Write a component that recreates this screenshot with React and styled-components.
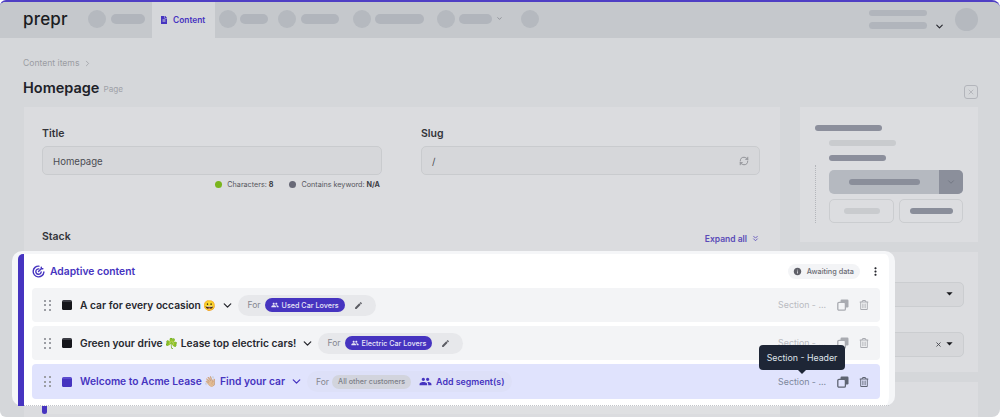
import React from 'react';
import styled, { createGlobalStyle } from 'styled-components';
import { ChevronDown, ChevronRight, ChevronsDown, RefreshCw, X } from 'lucide-react';
import { MdPeople, MdInfo, MdMoreVert, MdArrowDropDown, MdEdit } from 'react-icons/md';
import { FaFileAlt, FaRegTrashAlt } from 'react-icons/fa';

const PURPLE = '#4634c0';

const GlobalStyle = createGlobalStyle`
  html, body {
    margin: 0;
    padding: 0;
    background: #fff;
    font-family: Inter, "Noto Sans", sans-serif;
  }
  * { box-sizing: border-box; }
`;

const Page = styled.div`
  position: relative;
  width: 1000px;
  height: 417px;
  overflow: hidden;
  background: #d5d7da;
  border-top: 2px solid #4f3fc4;
  border-radius: 6px 8px 8px 6px;
`;

const Nav = styled.nav`
  display: flex;
  align-items: center;
  height: 36px;
  padding: 0 22px 3px 23px;
  background: #c5c8cc;
`;

const Logo = styled.div`
  width: 45px;
  margin-right: 20px;
  font-size: 17px;
  font-weight: 500;
  letter-spacing: 0.2px;
  line-height: 20px;
  color: #1b1c22;
`;

const SkeletonItem = styled.div`
  display: flex;
  align-items: center;
  gap: ${(p) => p.$inner || 5}px;
  margin-right: ${(p) => p.$gap || 10}px;
`;

const Circle = styled.span`
  display: block;
  width: ${(p) => p.$size || 18}px;
  height: ${(p) => p.$size || 18}px;
  border-radius: 50%;
  background: #b5b9bf;
`;

const Pill = styled.span`
  display: block;
  width: ${(p) => p.$width}px;
  height: ${(p) => p.$height || 10}px;
  border-radius: 5px;
  background: ${(p) => p.$color || '#b1b5bc'};
`;

const ActiveTab = styled.div`
  display: flex;
  align-items: center;
  gap: 5px;
  align-self: stretch;
  width: 63px;
  margin: 0 4px -3px 0;
  padding-left: 8px;
  background: #d5d7da;
  color: ${PURPLE};
  font-size: 8.4px;
  font-weight: 600;
`;

const NavRight = styled.div`
  display: flex;
  align-items: center;
  margin: 2px 0 0 auto;
`;

const NavLines = styled.div`
  display: flex;
  flex-direction: column;
  gap: 6px;
  margin-right: 7px;
`;

const NavChevron = styled(ChevronDown)`
  margin: 13px 10px 0 0;
  color: #26272e;
`;

const Body = styled.div`
  padding: 0 22px 0 23px;
`;

const Crumbs = styled.div`
  display: flex;
  align-items: center;
  gap: 4px;
  margin-top: 19px;
  height: 12px;
  font-size: 8.6px;
  color: #9b9da3;
`;

const TitleRow = styled.div`
  display: flex;
  align-items: center;
  height: 22px;
  margin-top: 7px;
`;

const Heading = styled.h1`
  margin: 0;
  font-size: 14.5px;
  font-weight: 600;
  color: #202128;
`;

const PageType = styled.span`
  margin: 3px 0 0 4px;
  font-size: 8.2px;
  color: #a0a2a8;
`;

const CollapseButton = styled.div`
  display: flex;
  align-items: center;
  justify-content: center;
  width: 14px;
  height: 14px;
  margin: 10px 0 0 auto;
  border: 1px solid #b3b5bb;
  border-radius: 3px;
  color: #a6a8ae;
`;

const Columns = styled.div`
  display: grid;
  grid-template-columns: 756px 178px;
  gap: 20px;
  margin: 9px 0 0 1px;
`;

const MainCard = styled.main`
  height: 320px;
  padding: 20px 20px 0 18px;
  background: #dbdcdf;
`;

const FieldGrid = styled.div`
  display: grid;
  grid-template-columns: 340px 339px;
  gap: 39px;
`;

const Label = styled.div`
  font-size: 10.5px;
  font-weight: 600;
  line-height: 14px;
  color: #33343a;
`;

const Input = styled.div`
  display: flex;
  align-items: center;
  justify-content: space-between;
  height: 29px;
  margin-top: 5px;
  padding: 1px 10px 0 10px;
  border: 1px solid #c9cbce;
  border-radius: 5px;
  background: #d6d7da;
  font-size: 9.6px;
  color: #4b4c53;
`;

const MetaRow = styled.div`
  display: flex;
  justify-content: flex-end;
  gap: 16px;
  height: 12px;
  margin-top: 3px;
  padding-right: 2px;
`;

const Meta = styled.span`
  display: flex;
  align-items: center;
  gap: 5px;
  font-size: 7.2px;
  color: #55565d;
  b { color: #3c3d44; }
`;

const Dot = styled.i`
  width: 7px;
  height: 7px;
  border-radius: 50%;
  background: ${(p) => p.$color};
`;

const StackRow = styled.div`
  display: flex;
  align-items: center;
  justify-content: space-between;
  margin-top: 40px;
`;

const ExpandAll = styled.div`
  display: flex;
  align-items: center;
  gap: 4px;
  margin-top: 3px;
  font-size: 8.5px;
  font-weight: 600;
  color: #5a4bb8;
`;

const NextBlock = styled.div`
  display: flex;
  height: 9px;
  margin: 161px -20px 0 0;
`;

const NextStub = styled.div`
  width: 5px;
  border-radius: 0 0 3px 3px;
  background: ${PURPLE};
`;

const NextRow = styled.div`
  flex: 1;
  background: #dfe0e2;
`;

const Sidebar = styled.aside`
  display: flex;
  flex-direction: column;
  gap: 10px;
  height: 320px;
`;

const SideCard = styled.section`
  flex: ${(p) => (p.$fill ? 1 : 'none')};
  height: ${(p) => (p.$height ? `${p.$height}px` : 'auto')};
  padding: ${(p) => p.$padding || '18px 15px'};
  background: #dcdde0;
`;

const Tree = styled.div`
  position: relative;
  display: flex;
  flex-direction: column;
  align-items: flex-start;
  gap: 9px;
  margin-top: 9px;
  padding-left: 14px;
  &::before {
    content: '';
    position: absolute;
    left: 0;
    top: 25px;
    bottom: 0;
    border-left: 1px dotted #b4b6bb;
  }
`;

const SplitButton = styled.div`
  display: flex;
  width: 134px;
  height: 24px;
  overflow: hidden;
  border-radius: 5px;
  background: #b5b9c0;
`;

const SplitLabel = styled.div`
  display: flex;
  flex: 1;
  align-items: center;
  justify-content: center;
`;

const SplitCaret = styled.div`
  display: flex;
  align-items: center;
  justify-content: center;
  width: 24px;
  background: #8b8f9b;
  color: #6f7380;
`;

const GhostRow = styled.div`
  display: grid;
  grid-template-columns: 65px 64px;
  gap: 5px;
  margin-top: -4px;
`;

const GhostButton = styled.div`
  display: flex;
  align-items: center;
  justify-content: center;
  height: 24px;
  border: 1px solid #cbcdd0;
  border-radius: 5px;
`;

const SelectStack = styled.div`
  display: flex;
  flex-direction: column;
  gap: 25px;
`;

const Select = styled.div`
  display: flex;
  align-items: center;
  justify-content: flex-end;
  height: 25px;
  padding-right: 6px;
  border: 1px solid #cbcdd0;
  border-radius: 5px;
  background: #d6d7da;
  color: #17181d;
`;

const Caret = styled(MdArrowDropDown)`
  margin-top: -3px;
`;

const Spotlight = styled.section`
  position: absolute;
  left: 12px;
  top: 249px;
  width: 883px;
  height: 155px;
  padding: 0 9px 7px 14px;
  border: solid #f5f6f8;
  border-width: 3px 6px 0 6px;
  border-radius: 10px;
  background: #fff;
  &::before {
    content: '';
    position: absolute;
    left: 0;
    top: 0;
    bottom: 0;
    width: 6px;
    border-radius: 5px 0 0 0;
    background: ${PURPLE};
  }
  &::after {
    content: '';
    position: absolute;
    left: 6px;
    right: 0;
    bottom: 0;
    border-bottom: 1px dotted #c3c5c9;
  }
`;

const SpotlightHeader = styled.header`
  display: flex;
  align-items: center;
  height: 34px;
  color: ${PURPLE};
  font-size: 10.3px;
  font-weight: 600;
`;

const AdaptiveTitle = styled.div`
  display: flex;
  align-items: center;
  gap: 5px;
`;

const Awaiting = styled.div`
  display: flex;
  align-items: center;
  gap: 5px;
  height: 15px;
  margin-left: auto;
  padding: 0 6px 0 5px;
  border-radius: 8px;
  background: #f3f4f6;
  font-size: 7.3px;
  font-weight: 500;
  color: #6b6d75;
`;

const Kebab = styled(MdMoreVert)`
  margin: 0 -1.5px 0 8.5px;
  color: #26272e;
`;

const Rows = styled.div`
  display: flex;
  flex-direction: column;
  gap: 4px;
`;

const Row = styled.div`
  display: flex;
  align-items: center;
  height: ${(p) => (p.$active ? 35 : 34)}px;
  padding: 0 11px 0 12px;
  border-radius: 4px;
  background: ${(p) => (p.$active ? '#e0e3fd' : '#f3f4f6')};
  color: ${(p) => (p.$active ? PURPLE : '#26272e')};
`;

const Handle = styled.span`
  display: grid;
  grid-template-columns: repeat(2, 2px);
  gap: 2.5px;
  width: 6.5px;
  margin-right: 11.5px;
  i {
    width: 2px;
    height: 2px;
    background: #9c9ea4;
  }
`;

const BlockIcon = styled.span`
  display: block;
  width: 10px;
  height: 10px;
  margin-right: 8px;
  border-radius: 1.5px;
  border-top: 2px solid ${(p) => (p.$active ? '#5b4bcf' : '#3b3c44')};
  background: ${(p) => (p.$active ? PURPLE : '#15161b')};
`;

const RowTitle = styled.span`
  font-size: 10.25px;
  font-weight: 600;
  white-space: nowrap;
`;

const RowChevron = styled(ChevronDown)`
  margin: 0 4px 0 5px;
  flex: none;
`;

const AudiencePill = styled.div`
  display: flex;
  align-items: center;
  height: 21px;
  padding: 0 ${(p) => (p.$plain ? 8 : 13)}px 0 9px;
  border-radius: 11px;
  background: ${(p) => (p.$plain ? '#dde0f8' : '#e7e8eb')};
  font-size: 8.6px;
  color: #85878f;
`;

const Tag = styled.span`
  display: flex;
  align-items: center;
  gap: 3px;
  height: 14px;
  margin-left: ${(p) => (p.$muted ? 3 : 4)}px;
  padding: 0 6px;
  border-radius: 7px;
  background: ${(p) => (p.$muted ? '#d2d4dd' : PURPLE)};
  color: ${(p) => (p.$muted ? '#7d7f88' : '#e8e7f7')};
  font-size: 7.2px;
  font-weight: 500;
  white-space: nowrap;
`;

const EditIcon = styled(MdEdit)`
  margin-left: 9px;
  color: #5b5c63;
`;

const AddSegment = styled.span`
  display: flex;
  align-items: center;
  gap: 4px;
  margin-left: 8px;
  font-size: 8.85px;
  font-weight: 600;
  color: ${PURPLE};
  white-space: nowrap;
`;

const SectionName = styled.span`
  position: relative;
  margin-left: auto;
  font-size: 8.8px;
  line-height: 12px;
  white-space: nowrap;
  color: ${(p) => (p.$active ? '#7d879c' : '#b9bbc1')};
`;

const Tooltip = styled.div`
  position: absolute;
  bottom: calc(100% + 6px);
  left: 50%;
  transform: translateX(-50%);
  z-index: 2;
  width: 86px;
  height: 25px;
  border-radius: 4px;
  background: #1e2636;
  color: #dfe3e9;
  font-size: 8.8px;
  line-height: 25px;
  text-align: center;
  &::after {
    content: '';
    position: absolute;
    left: 50%;
    top: 100%;
    margin-left: -4px;
    border: 4px solid transparent;
    border-bottom: 0;
    border-top-color: #1e2636;
  }
`;

const RowActions = styled.div`
  display: flex;
  align-items: center;
  gap: 10px;
  margin-left: 11px;
  color: ${(p) => (p.$active ? '#5e6472' : '#a9abb1')};
`;

const CopyIcon = ({ fill }) => (
  <svg width="12" height="12" viewBox="0 0 12 12">
    <rect x="3.5" y="0.5" width="8" height="8" rx="1.2" fill="currentColor" />
    <rect x="0.8" y="3.3" width="7.6" height="7.9" rx="1.2" fill={fill} stroke="currentColor" strokeWidth="1.3" />
  </svg>
);

const AdaptiveIcon = () => (
  <svg width="13" height="13" viewBox="0 0 14 14" fill="none" stroke={PURPLE} strokeWidth="1.5" strokeLinecap="round">
    <path d="M7.5 1.2a5.8 5.8 0 1 0 5.3 6.4" />
    <path d="M7.4 4.2a2.9 2.9 0 1 0 2.5 3.2" />
    <path d="M7 7l3-3M10 4V2.4M10 4h1.7" />
  </svg>
);

const DragHandle = () => (
  <Handle>
    {[0, 1, 2, 3, 4, 5].map((n) => (
      <i key={n} />
    ))}
  </Handle>
);

const ContentRow = ({ title, active, audience, muted, last }) => (
  <Row $active={active}>
    <DragHandle />
    <BlockIcon $active={active} />
    <RowTitle>{title}</RowTitle>
    <RowChevron size={13} strokeWidth={2.4} />
    <AudiencePill $plain={active}>
      For
      <Tag $muted={muted}>
        {!muted && <MdPeople size={8} />}
        {audience}
      </Tag>
      {active ? (
        <AddSegment>
          <MdPeople size={13} />
          Add segment(s)
        </AddSegment>
      ) : (
        <EditIcon size={9} />
      )}
    </AudiencePill>
    <SectionName $active={active}>
      Section - ...
      {last && <Tooltip>Section - Header</Tooltip>}
    </SectionName>
    <RowActions $active={active}>
      <CopyIcon fill={active ? '#e0e3fd' : '#f3f4f6'} />
      <FaRegTrashAlt size={10} />
    </RowActions>
  </Row>
);

const App = () => (
  <>
    <GlobalStyle />
    <Page>
      <Nav>
        <Logo>prepr</Logo>
        <SkeletonItem $gap={7}>
          <Circle />
          <Pill $width={34} />
        </SkeletonItem>
        <ActiveTab>
          <FaFileAlt size={8} />
          Content
        </ActiveTab>
        <SkeletonItem $inner={3} $gap={10}>
          <Circle />
          <Pill $width={28} />
        </SkeletonItem>
        <SkeletonItem $inner={5} $gap={14}>
          <Circle />
          <Pill $width={38} />
        </SkeletonItem>
        <SkeletonItem $inner={4} $gap={13}>
          <Circle />
          <Pill $width={49} />
        </SkeletonItem>
        <SkeletonItem $inner={4} $gap={18}>
          <Circle />
          <Pill $width={33} />
          <ChevronDown size={7} color="#6f7278" />
        </SkeletonItem>
        <Circle />
        <NavRight>
          <NavLines>
            <Pill $width={58} $height={6} />
            <Pill $width={58} $height={7} />
          </NavLines>
          <NavChevron size={11} strokeWidth={2.5} />
          <Circle $size={23} />
        </NavRight>
      </Nav>
      <Body>
        <Crumbs>
          Content items
          <ChevronRight size={9} />
        </Crumbs>
        <TitleRow>
          <Heading>Homepage</Heading>
          <PageType>Page</PageType>
          <CollapseButton>
            <X size={8} />
          </CollapseButton>
        </TitleRow>
        <Columns>
          <MainCard>
            <FieldGrid>
              <div>
                <Label>Title</Label>
                <Input>Homepage</Input>
                <MetaRow>
                  <Meta>
                    <Dot $color="#7ab51d" />
                    <span>
                      Characters: <b>8</b>
                    </span>
                  </Meta>
                  <Meta>
                    <Dot $color="#686977" />
                    <span>
                      Contains keyword: <b>N/A</b>
                    </span>
                  </Meta>
                </MetaRow>
              </div>
              <div>
                <Label>Slug</Label>
                <Input>
                  /
                  <RefreshCw size={10} color="#85878d" />
                </Input>
              </div>
            </FieldGrid>
            <StackRow>
              <Label>Stack</Label>
              <ExpandAll>
                Expand all
                <ChevronsDown size={9} strokeWidth={2.2} />
              </ExpandAll>
            </StackRow>
            <NextBlock>
              <NextStub />
              <NextRow />
            </NextBlock>
          </MainCard>
          <Sidebar>
            <SideCard $height={135}>
              <Pill $width={67} $height={6} $color="#8c8f9c" />
              <Tree>
                <Pill $width={67} $height={6} $color="#c9cbce" />
                <Pill $width={57} $height={6} $color="#8c8f9c" />
                <SplitButton>
                  <SplitLabel>
                    <Pill $width={71} $height={6} $color="#8a8e9a" />
                  </SplitLabel>
                  <SplitCaret>
                    <ChevronDown size={10} />
                  </SplitCaret>
                </SplitButton>
                <GhostRow>
                  <GhostButton>
                    <Pill $width={36} $height={6} $color="#c9cbce" />
                  </GhostButton>
                  <GhostButton>
                    <Pill $width={43} $height={6} $color="#8a8e9a" />
                  </GhostButton>
                </GhostRow>
              </Tree>
            </SideCard>
            <SideCard $height={120} $padding="30px 14px 0 15px">
              <SelectStack>
                <Select>
                  <Caret size={15} />
                </Select>
                <Select>
                  <X size={7} strokeWidth={3} color="#45464c" />
                  <Caret size={15} />
                </Select>
              </SelectStack>
            </SideCard>
            <SideCard $fill />
          </Sidebar>
        </Columns>
      </Body>
      <Spotlight>
        <SpotlightHeader>
          <AdaptiveTitle>
            <AdaptiveIcon />
            Adaptive content
          </AdaptiveTitle>
          <Awaiting>
            <MdInfo size={9} color="#5f6068" />
            Awaiting data
          </Awaiting>
          <Kebab size={13} />
        </SpotlightHeader>
        <Rows>
          <ContentRow title="A car for every occasion 😀" audience="Used Car Lovers" />
          <ContentRow title="Green your drive ☘️ Lease top electric cars!" audience="Electric Car Lovers" />
          <ContentRow title="Welcome to Acme Lease 👋🏼 Find your car" audience="All other customers" active muted last />
        </Rows>
      </Spotlight>
    </Page>
  </>
);

export default App;
